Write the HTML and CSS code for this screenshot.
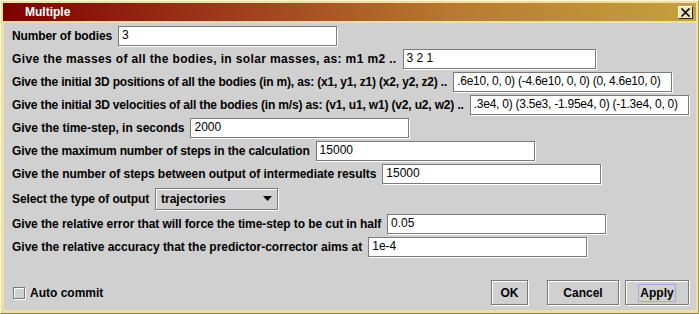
FILE: index.html
```html
<!DOCTYPE html>
<html lang="en">
<head>
    <meta charset="UTF-8">
    <title>Multiple</title>
    <link rel="stylesheet" href="styles.css">
</head>
<body>
    <div class="window">
        <!-- Title bar -->
        <div class="titlebar">
            <span class="title">Multiple</span>
            <span class="close-btn">
                <svg width="11" height="9" viewBox="0 0 11 9">
                    <path d="M1.5 0.5 L9.5 8.5 M9.5 0.5 L1.5 8.5" stroke="#000" stroke-width="1.6" fill="none"/>
                </svg>
            </span>
        </div>

        <div class="content">
            <div class="form">
                <div class="row">
                    <label class="lbl-bodies">Number of bodies</label>
                    <div class="field">3</div>
                </div>
                <div class="row">
                    <label class="lbl-masses">Give the masses of all the bodies, in solar masses, as: m1 m2 ..</label>
                    <div class="field field-short">3 2 1</div>
                </div>
                <div class="row">
                    <label class="lbl-positions">Give the initial 3D positions of all the bodies (in m), as: (x1, y1, z1) (x2, y2, z2) ..</label>
                    <div class="field field-tight">.6e10, 0, 0) (-4.6e10, 0, 0) (0, 4.6e10, 0)</div>
                </div>
                <div class="row">
                    <label class="lbl-velocities">Give the initial 3D velocities of all the bodies (in m/s) as: (v1, u1, w1) (v2, u2, w2) ..</label>
                    <div class="field field-tight">.3e4, 0) (3.5e3, -1.95e4, 0) (-1.3e4, 0, 0)</div>
                </div>
                <div class="row">
                    <label class="lbl-step">Give the time-step, in seconds</label>
                    <div class="field">2000</div>
                </div>
                <div class="row">
                    <label class="lbl-max">Give the maximum number of steps in the calculation</label>
                    <div class="field">15000</div>
                </div>
                <div class="row">
                    <label class="lbl-between">Give the number of steps between output of intermediate results</label>
                    <div class="field">15000</div>
                </div>
                <div class="row row-combo">
                    <label class="lbl-type">Select the type of output</label>
                    <div class="combo">
                        <span>trajectories</span>
                        <svg class="combo-arrow" width="9" height="5" viewBox="0 0 9 5">
                            <path d="M0 0 H9 L4.5 5 Z" fill="#000"/>
                        </svg>
                    </div>
                </div>
                <div class="row">
                    <label class="lbl-error">Give the relative error that will force the time-step to be cut in half</label>
                    <div class="field">0.05</div>
                </div>
                <div class="row">
                    <label class="lbl-accuracy">Give the relative accuracy that the predictor-corrector aims at</label>
                    <div class="field">1e-4</div>
                </div>
            </div>

            <!-- Bottom bar -->
            <div class="bottom">
                <div class="check">
                    <span class="check-box"></span>
                    <span class="check-label">Auto commit</span>
                </div>
                <div class="buttons">
                    <button class="btn btn-ok">OK</button>
                    <button class="btn btn-cancel">Cancel</button>
                    <button class="btn btn-apply"><span class="focus">Apply</span></button>
                </div>
            </div>
        </div>
    </div>
</body>
</html>
```

FILE: styles.css
```css
* {
    box-sizing: border-box;
}

html, body {
    margin: 0;
    padding: 0;
}

body {
    font-family: "Liberation Sans", Arial, sans-serif;
    font-size: 12px;
    color: #000;
    background: #e9dca6;
}

/* Window frame */
.window {
    width: 699px;
    height: 314px;
    display: flex;
    flex-direction: column;
    background: #ecdfa8;
    border-top: 1px solid #fff6d2;
    border-left: 1px solid #fff6d2;
    border-right: 1px solid #a89660;
    border-bottom: 1px solid #8c7c48;
    padding: 2px 2px 3px 2px;
}

.titlebar {
    height: 18px;
    display: flex;
    align-items: center;
    justify-content: space-between;
    background: linear-gradient(to right, #7e0000 0%, #a0401c 35%, #b87a30 65%, #c4a23e 100%);
    padding: 0 3px 0 22px;
    margin-bottom: 2px;
}

.title {
    color: #fff;
    font-weight: bold;
    font-size: 12px;
}

.close-btn {
    width: 15px;
    height: 13px;
    display: flex;
    align-items: center;
    justify-content: center;
    background: #efe4b6;
    border-top: 1px solid #fffbe6;
    border-left: 1px solid #fffbe6;
    border-right: 1px solid #2a2410;
    border-bottom: 1px solid #2a2410;
}

.content {
    flex: 1;
    display: flex;
    flex-direction: column;
    background: #d0d0d0;
    margin-left: 1px;
    padding: 3px 6px 5px 8px;
}

/* Form rows */
.form {
    display: flex;
    flex-direction: column;
    gap: 3px;
}

.row {
    height: 20px;
    display: flex;
    align-items: center;
    gap: 6px;
}

.row-combo {
    height: 24px;
}

.row label {
    font-weight: bold;
    white-space: nowrap;
}

/* per-label tracking so the fields land where the reference puts them */
.lbl-bodies { letter-spacing: -0.12px; }
.lbl-masses { letter-spacing: 0.36px; }
.lbl-positions { letter-spacing: -0.17px; }
.lbl-velocities { letter-spacing: -0.16px; }
.lbl-step { letter-spacing: -0.03px; }
.lbl-max { letter-spacing: -0.14px; }
.lbl-between { letter-spacing: -0.06px; }
.lbl-type { letter-spacing: -0.12px; }
.lbl-error { letter-spacing: -0.08px; }
.lbl-accuracy { letter-spacing: -0.02px; }

.field {
    width: 219px;
    height: 20px;
    background: #fff;
    border: 1px solid #7a7a7a;
    box-shadow: 1px 1px 0 #fff;
    padding: 0 3px;
    line-height: 17px;
    white-space: nowrap;
    overflow: hidden;
    margin-bottom: 1px;
}

.field-short {
    width: 193px;
}

.field-tight {
    letter-spacing: -0.25px;
    padding: 0 2px 0 3px;
}

.combo {
    width: 123px;
    height: 22px;
    display: flex;
    align-items: center;
    justify-content: space-between;
    border: 1px solid #7a7a7a;
    box-shadow: inset 1px 1px 0 #fff, 1px 1px 0 #fff;
    padding: 0 5px 0 5px;
    font-weight: bold;
}

.combo-arrow {
    margin-top: -1px;
}

/* Bottom bar */
.bottom {
    margin-top: auto;
    display: flex;
    align-items: center;
    justify-content: space-between;
}

.check {
    display: flex;
    align-items: center;
    gap: 5px;
    padding-left: 1px;
}

.check-box {
    width: 12px;
    height: 12px;
    border: 1px solid #7a7a7a;
    box-shadow: inset 1px 1px 0 #fff, 1px 1px 0 #fff;
}

.check-label {
    font-weight: bold;
}

.buttons {
    display: flex;
    gap: 6px;
    margin-right: 1px;
}

.btn {
    height: 25px;
    font-family: "Liberation Sans", Arial, sans-serif;
    font-size: 12px;
    font-weight: bold;
    color: #000;
    background: #d0d0d0;
    border: 1px solid #7a7a7a;
    box-shadow: inset 1px 1px 0 #fff, 1px 1px 0 #fff;
    padding: 0;
    display: flex;
    align-items: center;
    justify-content: center;
}

.btn-ok {
    width: 37px;
    margin-right: 13px;
}

.btn-cancel {
    width: 72px;
}

.btn-apply {
    width: 64px;
}

.focus {
    border: 1px solid #a8a8d4;
    padding: 1px 1px;
    line-height: 14px;
}
```
